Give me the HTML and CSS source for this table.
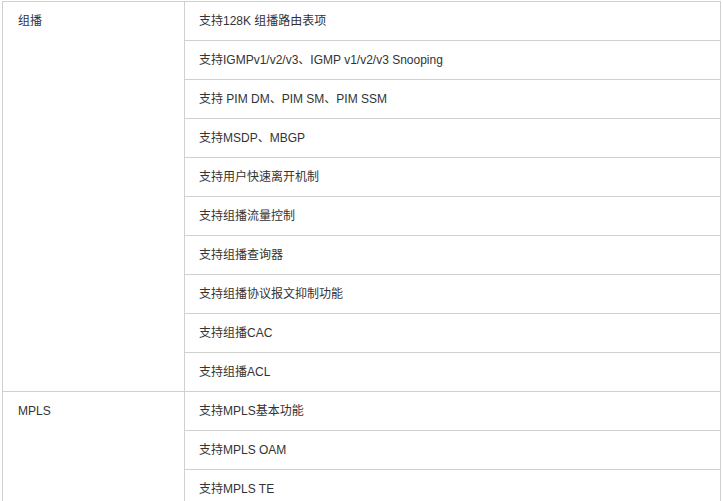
FILE: index.html
```html
<!DOCTYPE html>
<html lang="zh-CN">
  <head>
    <meta charset="UTF-8" />
    <meta name="viewport" content="width=device-width, initial-scale=1.0" />
    <title>产品特性</title>
    <link rel="stylesheet" href="styles.css">
  </head>
  <body>
    <table class="spec">
      <tbody>
        <tr>
          <td class="group" rowspan="10">组播</td>
          <td>支持128K 组播路由表项</td>
        </tr>
        <tr><td>支持IGMPv1/v2/v3、IGMP v1/v2/v3 Snooping</td></tr>
        <tr><td>支持 PIM DM、PIM SM、PIM SSM</td></tr>
        <tr><td>支持MSDP、MBGP</td></tr>
        <tr><td>支持用户快速离开机制</td></tr>
        <tr><td>支持组播流量控制</td></tr>
        <tr><td>支持组播查询器</td></tr>
        <tr><td>支持组播协议报文抑制功能</td></tr>
        <tr><td>支持组播CAC</td></tr>
        <tr><td>支持组播ACL</td></tr>
        <tr>
          <td class="group" rowspan="3">MPLS</td>
          <td>支持MPLS基本功能</td>
        </tr>
        <tr><td>支持MPLS OAM</td></tr>
        <tr><td>支持MPLS TE</td></tr>
      </tbody>
    </table>
  </body>
</html>
```

FILE: styles.css
```css
body {
  margin: 0;
  padding: 1px 2px;
  background: #fff;
  font-family: "Liberation Sans", Arial, "Noto Sans CJK SC", sans-serif;
  font-size: 12px;
  color: #333;
}
.spec {
  width: 719px;
  border-collapse: collapse;
  table-layout: fixed;
}
.spec td {
  height: 38px;
  padding: 0 14px;
  border: 1px solid #d0d0d0;
  line-height: 38px;
  vertical-align: middle;
}
.spec td.group {
  width: 152px;
  padding-left: 15px;
  vertical-align: top;
}
```
